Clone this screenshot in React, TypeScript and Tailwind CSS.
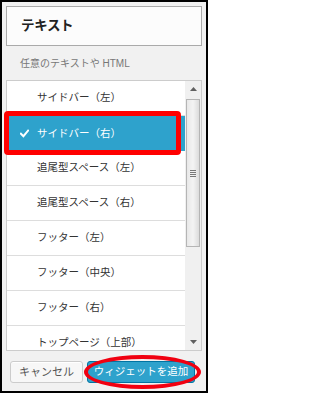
const items = [
  "サイドバー（左）",
  "サイドバー（右）",
  "追尾型スペース（左）",
  "追尾型スペース（右）",
  "フッター（左）",
  "フッター（中央）",
  "フッター（右）",
  "トップページ（上部）",
];

const font = { fontFamily: '"Liberation Sans", "Noto Sans CJK JP", sans-serif' };

export default function App() {
  return (
    <div
      className="relative w-[208px] h-[393px] overflow-hidden border-2 border-black bg-[#f1f1f1] px-[4px] pt-[4px]"
      style={font}
    >
      {/* Title */}
      <div className="h-[40px] border border-[#aaaaaa] bg-[#fcfcfc] flex items-center pl-[14px]">
        <h3 className="text-[13.5px] font-bold text-[#222] tracking-tight">テキスト</h3>
      </div>

      <p className="h-[34px] flex items-center pl-[14px] text-[10px] text-[#777]">
        任意のテキストや HTML
      </p>

      {/* Sidebar list */}
      <div className="h-[271px] border border-[#cccccc] bg-white flex overflow-hidden">
        <ul className="flex-1 overflow-hidden">
          {items.map((item, i) => {
            const selected = i === 1;
            return (
              <li
                key={item}
                className={
                  selected
                    ? "h-[35px] shrink-0 flex items-center bg-[#2ea2cc] text-white text-[10.5px] pl-[13px]"
                    : "h-[35px] shrink-0 flex items-center border-b border-[#dddddd] text-[#333] text-[10.5px] pl-[30px]"
                }
              >
                {selected && (
                  <svg viewBox="0 0 10 10" className="w-[9px] h-[9px] mr-[8px]">
                    <path
                      d="M1 5.2 L3.8 8 L9 1.8"
                      fill="none"
                      stroke="white"
                      strokeWidth="2.2"
                      strokeLinecap="square"
                    />
                  </svg>
                )}
                {item}
              </li>
            );
          })}
        </ul>

        {/* Scrollbar */}
        <div className="w-[16px] bg-[#f0f0f0] flex flex-col items-center">
          <div className="h-[16px] w-full flex items-center justify-center">
            <svg viewBox="0 0 7 4" className="w-[7px] h-[4px]">
              <path d="M0 4 L3.5 0 L7 4 Z" fill="#606060" />
            </svg>
          </div>
          <div className="mt-[2px] h-[148px] w-[14px] border border-[#b5b5b5] bg-gradient-to-r from-[#e8e8e8] via-[#f4f4f4] to-[#dcdcdc] flex items-center justify-center">
            <div className="flex flex-col gap-[1px]">
              <div className="w-[6px] h-px bg-[#777]" />
              <div className="w-[6px] h-px bg-[#777]" />
              <div className="w-[6px] h-px bg-[#777]" />
              <div className="w-[6px] h-px bg-[#777]" />
            </div>
          </div>
          <div className="flex-1" />
          <div className="h-[16px] w-full flex items-center justify-center">
            <svg viewBox="0 0 7 4" className="w-[7px] h-[4px]">
              <path d="M0 0 L7 0 L3.5 4 Z" fill="#606060" />
            </svg>
          </div>
        </div>
      </div>

      {/* Buttons */}
      <div className="mt-[10px] flex gap-[4px] pl-[4px]">
        <button className="h-[22px] w-[73px] rounded-[3px] border border-[#cccccc] bg-[#f7f7f7] text-[11px] text-[#555] shadow-[inset_0_1px_0_#fff]">
          キャンセル
        </button>
        <button className="h-[22px] w-[108px] rounded-[3px] border border-[#0074a2] bg-[#2ea2cc] text-[10.5px] text-white">
          ウィジェットを追加
        </button>
      </div>

      {/* Red annotations */}
      <div className="absolute left-[2px] top-[109px] w-[177px] h-[44px] border-[5px] border-[#ff0000] rounded-[4px]" />
      <div className="absolute left-[82px] top-[353px] w-[117px] h-[34px] border-[4px] border-[#f00010] rounded-[50%]" />
    </div>
  );
}
